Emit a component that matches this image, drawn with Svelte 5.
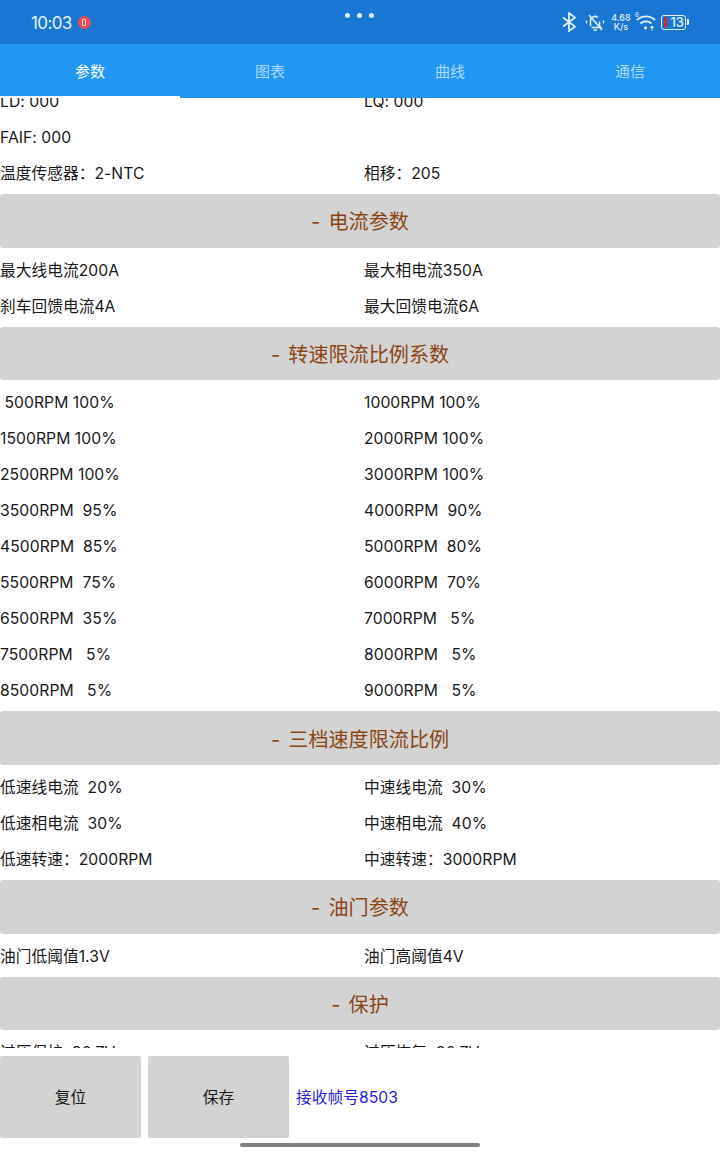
<script>
  const tabs = ['参数', '图表', '曲线', '通信'];

  const sections = [
    { rows: [['LD: 000', 'LQ: 000'], ['FAIF: 000', ''], ['温度传感器：2-NTC', '相移：205']] },
    { title: '- 电流参数', rows: [['最大线电流200A', '最大相电流350A'], ['刹车回馈电流4A', '最大回馈电流6A']] },
    {
      title: '- 转速限流比例系数',
      rows: [
        [' 500RPM 100%', '1000RPM 100%'],
        ['1500RPM 100%', '2000RPM 100%'],
        ['2500RPM 100%', '3000RPM 100%'],
        ['3500RPM  95%', '4000RPM  90%'],
        ['4500RPM  85%', '5000RPM  80%'],
        ['5500RPM  75%', '6000RPM  70%'],
        ['6500RPM  35%', '7000RPM   5%'],
        ['7500RPM   5%', '8000RPM   5%'],
        ['8500RPM   5%', '9000RPM   5%']
      ]
    },
    {
      title: '- 三档速度限流比例',
      rows: [
        ['低速线电流  20%', '中速线电流  30%'],
        ['低速相电流  30%', '中速相电流  40%'],
        ['低速转速：2000RPM', '中速转速：3000RPM']
      ]
    },
    { title: '- 油门参数', rows: [['油门低阈值1.3V', '油门高阈值4V']] },
    { title: '- 保护', rows: [['过压保护  80.7V', '过压恢复  80.7V']] }
  ];
</script>

<div class="page">
  <header class="status">
    <div class="clock">
      <span>10:03</span>
      <span class="rec"><i></i></span>
    </div>
    <div class="dots"><i></i><i></i><i></i></div>
    <div class="sys">
      <svg class="bt" width="14" height="20" viewBox="0 0 14 20" fill="none" stroke="#e3f0fb" stroke-width="1.8">
        <path d="M1 5.5 13 14.5 7 19V1L13 5.5 1 14.5" />
      </svg>
      <svg class="bell" width="22" height="20" viewBox="0 0 22 20" fill="none" stroke="#e3f0fb" stroke-width="1.6">
        <path d="M6.5 14V9a4.5 4.5 0 0 1 7.4-3.5M15.5 9.5V14l1.2 1.5H7.5" />
        <path d="M9.5 18h3.5M5 3l13 15" />
        <path d="M2.5 8.5v3M19.5 8.5v3" stroke-width="1.3" />
      </svg>
      <div class="speed"><span>4.68</span><span>K/s</span></div>
      <svg class="wifi" width="22" height="20" viewBox="0 0 22 20" fill="none" stroke="#e3f0fb" stroke-width="1.8">
        <path d="M2 8a13 13 0 0 1 18 0M5.5 11.5a8 8 0 0 1 11 0" />
        <circle cx="10.5" cy="15.8" r="1.6" fill="#e3f0fb" stroke="none" />
        <path d="M17 18.5v-4M15.6 15.8l1.4-1.6 1.4 1.6" stroke-width="1.1" />
        <text x="0" y="5" font-size="6.5" fill="#e3f0fb" stroke="none" font-family="Inter, sans-serif">6</text>
      </svg>
      <div class="battery">
        <i class="level"></i>
        <span>13</span>
      </div>
    </div>
  </header>

  <nav class="tabs">
    {#each tabs as tab, i}
      <div class="tab" class:active={i === 0}>{tab}</div>
    {/each}
  </nav>

  <main class="content">
    <div class="list">
      {#each sections as section}
        {#if section.title}
          <div class="section-title">{section.title}</div>
        {/if}
        {#each section.rows as row}
          <div class="row">
            <span>{row[0]}</span>
            <span>{row[1]}</span>
          </div>
        {/each}
      {/each}
    </div>
  </main>

  <footer class="actions">
    <button>复位</button>
    <button>保存</button>
    <span class="frames">接收帧号8503</span>
  </footer>

  <div class="home"><i></i></div>
</div>

<style>
  :global(body) {
    background: #fff;
  }

  .page {
    display: flex;
    flex-direction: column;
    width: 720px;
    height: 1152px;
    overflow: hidden;
    font-family: Inter, "Noto Sans CJK SC", sans-serif;
    color: #181818;
  }

  /* status bar */
  .status {
    display: grid;
    grid-template-columns: 1fr auto 1fr;
    align-items: center;
    height: 44px;
    padding: 0 32px 0 31px;
    background: #1976d2;
    color: #e3f0fb;
  }
  .clock {
    display: flex;
    align-items: center;
    gap: 6px;
    padding-top: 1px;
    font-size: 17px;
    letter-spacing: -0.6px;
  }
  .rec {
    display: flex;
    align-items: center;
    justify-content: center;
    width: 13px;
    height: 13px;
    border-radius: 50%;
    background: #ef4a57;
  }
  .rec i {
    width: 4px;
    height: 7px;
    border: 1px solid #ffd5d8;
    border-radius: 1px;
    box-sizing: border-box;
  }
  .dots {
    display: flex;
    gap: 7px;
    margin-bottom: 13px;
  }
  .dots i {
    width: 5px;
    height: 5px;
    border-radius: 50%;
    background: #e3f0fb;
  }
  .sys {
    display: flex;
    align-items: center;
    justify-content: flex-end;
  }
  .bell {
    margin-left: 8px;
  }
  .speed {
    display: flex;
    flex-direction: column;
    align-items: center;
    width: 20px;
    margin-left: 5px;
    font-size: 9px;
    font-weight: 500;
    line-height: 9px;
  }
  .wifi {
    margin-left: 4px;
  }
  .battery {
    position: relative;
    display: flex;
    align-items: center;
    justify-content: flex-end;
    box-sizing: border-box;
    width: 25px;
    height: 15px;
    margin: 0 2px 0 4px;
    padding-right: 1px;
    border: 1.5px solid #e3f0fb;
    border-radius: 3px;
    font-size: 13px;
    font-weight: 500;
    color: #e3f0fb;
  }
  .battery::after {
    content: '';
    position: absolute;
    right: -3.5px;
    top: 3px;
    width: 2px;
    height: 6px;
    border-radius: 0 1px 1px 0;
    background: #e3f0fb;
  }
  .level {
    position: absolute;
    left: 1.5px;
    top: 1.5px;
    bottom: 1.5px;
    width: 3px;
    background: #e0252f;
  }

  /* tabs */
  .tabs {
    display: grid;
    grid-template-columns: repeat(4, 1fr);
    height: 54px;
    background: #2196f3;
  }
  .tab {
    display: flex;
    align-items: center;
    justify-content: center;
    border-bottom: 2px solid transparent;
    font-size: 15px;
    color: rgba(255, 255, 255, 0.65);
  }
  .tab.active {
    color: #fff;
    border-bottom-color: #fff;
  }

  /* scrolled parameter list */
  .content {
    flex: 1;
    min-height: 0;
    overflow: hidden;
    background: #fff;
  }
  .list {
    margin-top: -15px;
  }
  .row {
    display: grid;
    grid-template-columns: 364px 1fr;
    align-items: center;
    box-sizing: border-box;
    height: 36px;
    padding-top: 1.8px;
    font-size: 15.7px;
    line-height: 22px;
    letter-spacing: 0.05px;
    white-space: pre;
  }
  .section-title {
    display: flex;
    align-items: center;
    justify-content: center;
    height: 53.7px;
    margin: 3px 0 4px;
    border-radius: 3px;
    background: #d3d3d3;
    font-size: 20.1px;
    word-spacing: 2.5px;
    color: #8b4513;
  }

  /* bottom actions */
  .actions {
    display: flex;
    align-items: center;
    gap: 7px;
    height: 82px;
    padding-top: 8px;
    background: #fff;
  }
  .actions button {
    width: 141px;
    height: 82px;
    padding: 0 0 2px;
    border: 0;
    border-radius: 2px;
    background: #d3d3d3;
    font: inherit;
    font-size: 15.7px;
    color: #181818;
  }
  .frames {
    margin-bottom: 2px;
    font-size: 15.7px;
    letter-spacing: 0.05px;
    color: #1f1fdc;
  }
  .home {
    display: flex;
    justify-content: center;
    height: 9px;
    padding-top: 5px;
  }
  .home i {
    width: 240px;
    height: 4px;
    border-radius: 2px;
    background: #808080;
  }
</style>
